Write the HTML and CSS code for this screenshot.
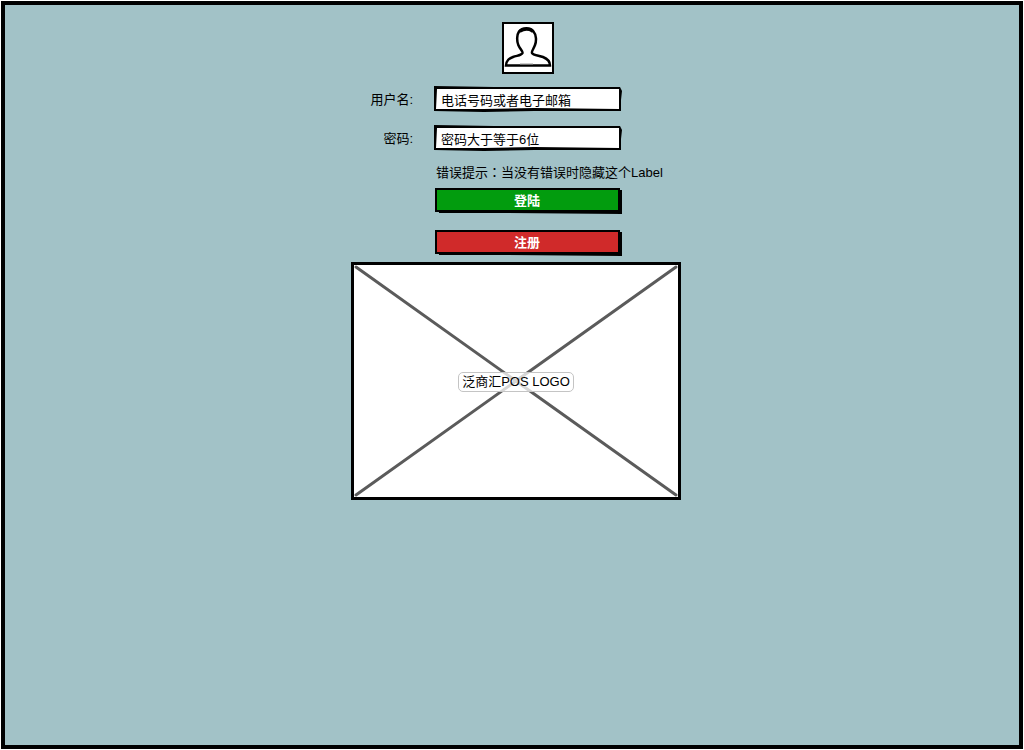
FILE: index.html
```html
<!DOCTYPE html>
<html lang="zh-CN">
<head>
<meta charset="utf-8">
<meta name="viewport" content="width=device-width, initial-scale=1">
<title>登陆</title>
<link rel="stylesheet" href="styles.css">
</head>
<body>
<main class="screen">
  <div class="login">
    <form class="form">
      <svg class="avatar" viewBox="0 0 52 52" role="img" aria-label="用户头像">
        <rect x="1" y="1" width="50" height="50" fill="#fff" stroke="#000" stroke-width="2"/>
        <path d="M4 43.500C4.500 38 7 36.500 11 35C15 33.500 19.500 33.500 20.500 31C21 29.500 18 27 16.300 23C14.500 18.500 15 12.500 17 9.500C20 5 29 5 31.500 9.500C34.500 13 34.500 19 33 23C31.500 27 29.300 29.500 30 31C31 33.300 37 33.500 41 35C45.500 36.800 48 39 48 43.500Z" fill="#fff" stroke="#000" stroke-width="2.500"/>
        <path d="M18.500 9C21.500 6.500 27.500 6.500 30 9" fill="none" stroke="#000" stroke-width="3" stroke-linecap="round"/>
        <path d="M18 42H31" stroke="#999" stroke-width="1"/>
      </svg>

      <label class="label" for="username">用户名:</label>
      <div class="field">
        <input class="input" id="username" type="text" placeholder="电话号码或者电子邮箱">
        <svg class="sketch" viewBox="0 0 188 26" preserveAspectRatio="none" aria-hidden="true">
          <path fill-rule="evenodd" d="M0 0L60 1L186 1L188 5L187 14L187 25L100 25L50 26L0 25ZM3 3L2 23L50 23L100 22L185 23L185 12L185 3L60 3Z"/>
        </svg>
      </div>

      <label class="label" for="password">密码:</label>
      <div class="field">
        <input class="input" id="password" type="text" placeholder="密码大于等于6位">
        <svg class="sketch" viewBox="0 0 188 26" preserveAspectRatio="none" aria-hidden="true">
          <path fill-rule="evenodd" d="M0 0L60 1L186 1L188 5L187 14L187 25L100 25L50 26L0 25ZM3 3L2 23L50 23L100 22L185 23L185 12L185 3L60 3Z"/>
        </svg>
      </div>

      <p class="error">错误提示<span class="colon" lang="zh-TW">：</span>当没有错误时隐藏这个Label</p>

      <button class="button button-login" type="submit">
        <svg class="sketch" viewBox="0 0 188 27" preserveAspectRatio="none" aria-hidden="true">
          <path d="M4 3H188V27L70 26H5Z"/>
          <path class="face" d="M2 2L60 2L185 2L185 24L100 24L2 24Z"/>
        </svg>
        <span class="caption">登陆</span>
      </button>
      <button class="button button-register" type="button">
        <svg class="sketch" viewBox="0 0 188 27" preserveAspectRatio="none" aria-hidden="true">
          <path d="M4 3H188V27L70 26H5Z"/>
          <path class="face" d="M2 2L60 2L185 2L185 24L100 24L2 24Z"/>
        </svg>
        <span class="caption">注册</span>
      </button>
    </form>

    <div class="logo">
      <svg class="cross" viewBox="0 0 324 232" preserveAspectRatio="none" aria-hidden="true">
        <path d="M2 2L322 230M322 2L2 230"/>
      </svg>
      <span class="logo-name">泛商汇POS LOGO</span>
    </div>
  </div>
</main>
</body>
</html>
```
FILE: styles.css
```css
* {
  box-sizing: border-box;
}

body {
  margin: 0;
  padding: 1px;
  background: #fff;
  color: #000;
  font: 13px/18px "Liberation Sans", "Noto Sans CJK SC", sans-serif;
}

.screen {
  min-height: calc(100vh - 2px);
  padding: 17px 8px 16px 16px;
  border: 4px solid #000;
  background: #a2c2c7;
}

.login {
  width: 330px;
  max-width: 100%;
  margin: 0 auto;
}

.form {
  display: grid;
  grid-template-columns: 62px 1fr;
  column-gap: 21px;
  align-items: center;
}

.avatar {
  grid-column: 2;
  width: 52px;
  height: 52px;
  margin: 0 0 12px 68px;
}

.label {
  margin-bottom: 12px;
  text-align: right;
}

.field {
  position: relative;
  width: 188px;
  height: 26px;
  margin-bottom: 13px;
}

.input {
  display: block;
  width: 100%;
  height: 100%;
  padding: 2px 5px 0;
  border: 2px solid transparent;
  background: #fff;
  background-clip: padding-box;
  color: #000;
  font: inherit;
}

.input::placeholder {
  color: #000;
  opacity: 1;
}

.sketch {
  position: absolute;
  inset: 0;
  width: 100%;
  height: 100%;
  pointer-events: none;
}

.error {
  grid-column: 2;
  margin: 0 0 5px 2px;
  white-space: nowrap;
}

.colon {
  font-family: "Noto Sans CJK TC", sans-serif;
  line-height: 1;
}

.button {
  position: relative;
  grid-column: 2;
  width: 188px;
  height: 27px;
  margin: 0 0 15px;
  padding: 1px 2px 0 0;
  border: 0;
  background: none;
  color: #fff;
  font: inherit;
  font-weight: bold;
}

.button-register {
  margin-bottom: 6px;
}

.face {
  stroke: #000;
  stroke-width: 2;
}

.button-login .face {
  fill: #029c0e;
}

.button-register .face {
  fill: #d02a2a;
}

.caption {
  position: relative;
}

.logo {
  position: relative;
  display: flex;
  align-items: center;
  justify-content: center;
  height: 238px;
  padding-top: 2px;
  border: 3px solid #000;
  background: #fff;
}

.cross {
  position: absolute;
  inset: 0;
  width: 100%;
  height: 100%;
  fill: none;
  stroke: #5b5b5b;
  stroke-width: 3;
  stroke-linecap: round;
}

.logo-name {
  position: relative;
  padding: 0 3px;
  border: 1px solid #c4c4c4;
  border-radius: 5px;
  background: rgba(255, 255, 255, 0.75);
  white-space: nowrap;
}
```
